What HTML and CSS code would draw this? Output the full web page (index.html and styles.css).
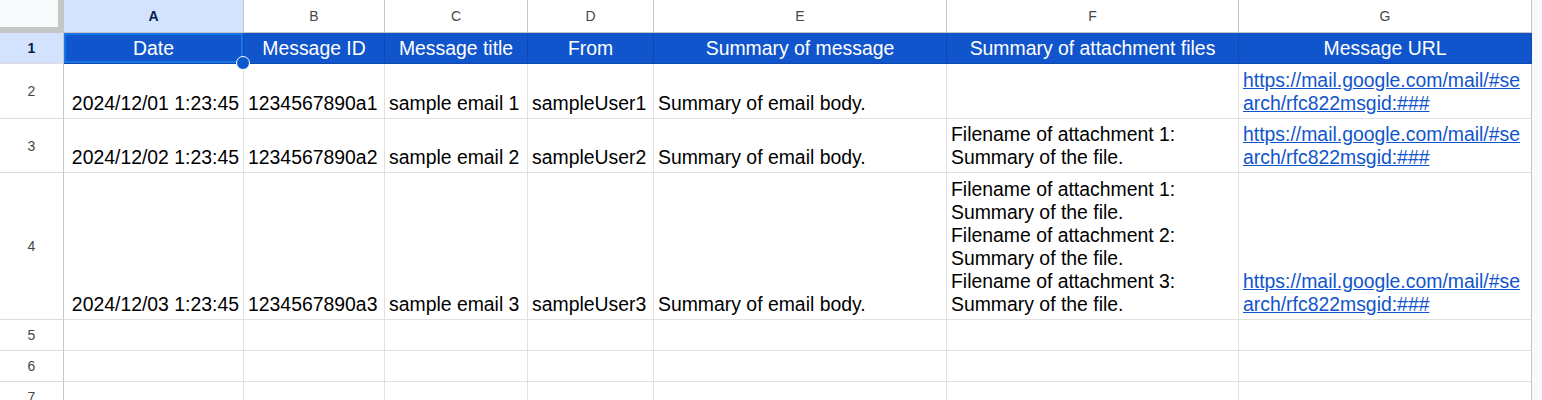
FILE: index.html
```html
<!DOCTYPE html>
<html lang="en">
<head>
  <meta charset="UTF-8">
  <title>Mail summary sheet</title>
  <link rel="stylesheet" href="styles.css">
</head>
<body>

  <!-- Spreadsheet grid -->
  <div class="sheet">
    <!-- column letters -->
    <div class="corner"></div>
    <div class="col-head sel">A</div>
    <div class="col-head">B</div>
    <div class="col-head">C</div>
    <div class="col-head">D</div>
    <div class="col-head">E</div>
    <div class="col-head">F</div>
    <div class="col-head last">G</div>

    <!-- row 1: titles -->
    <div class="row-head sel">1</div>
    <div class="cell title active">Date<span class="handle"></span></div>
    <div class="cell title">Message ID</div>
    <div class="cell title">Message title</div>
    <div class="cell title">From</div>
    <div class="cell title">Summary of message</div>
    <div class="cell title">Summary of attachment files</div>
    <div class="cell title last">Message URL</div>

    <!-- row 2 -->
    <div class="row-head">2</div>
    <div class="cell num">2024/12/01 1:23:45</div>
    <div class="cell">1234567890a1</div>
    <div class="cell">sample email 1</div>
    <div class="cell">sampleUser1</div>
    <div class="cell">Summary of email body.</div>
    <div class="cell"></div>
    <div class="cell last"><a class="lines" href="#">https://mail.google.com/mail/#se<br>arch/rfc822msgid:###</a></div>

    <!-- row 3 -->
    <div class="row-head">3</div>
    <div class="cell num">2024/12/02 1:23:45</div>
    <div class="cell">1234567890a2</div>
    <div class="cell">sample email 2</div>
    <div class="cell">sampleUser2</div>
    <div class="cell">Summary of email body.</div>
    <div class="cell"><span class="lines">Filename of attachment 1:<br>Summary of the file.</span></div>
    <div class="cell last"><a class="lines" href="#">https://mail.google.com/mail/#se<br>arch/rfc822msgid:###</a></div>

    <!-- row 4 -->
    <div class="row-head">4</div>
    <div class="cell num">2024/12/03 1:23:45</div>
    <div class="cell">1234567890a3</div>
    <div class="cell">sample email 3</div>
    <div class="cell">sampleUser3</div>
    <div class="cell">Summary of email body.</div>
    <div class="cell"><span class="lines">Filename of attachment 1:<br>Summary of the file.<br>Filename of attachment 2:<br>Summary of the file.<br>Filename of attachment 3:<br>Summary of the file.</span></div>
    <div class="cell last"><a class="lines" href="#">https://mail.google.com/mail/#se<br>arch/rfc822msgid:###</a></div>

    <!-- empty rows -->
    <div class="row-head">5</div>
    <div class="cell"></div><div class="cell"></div><div class="cell"></div><div class="cell"></div>
    <div class="cell"></div><div class="cell"></div><div class="cell last"></div>

    <div class="row-head">6</div>
    <div class="cell"></div><div class="cell"></div><div class="cell"></div><div class="cell"></div>
    <div class="cell"></div><div class="cell"></div><div class="cell last"></div>

    <div class="row-head">7</div>
    <div class="cell"></div><div class="cell"></div><div class="cell"></div><div class="cell"></div>
    <div class="cell"></div><div class="cell"></div><div class="cell last"></div>
  </div>

</body>
</html>
```

FILE: styles.css
```css
body {
  margin: 0;
  padding: 0;
  background: #f8f9fa;
  font-family: 'Liberation Sans', Arial, sans-serif;
  color: #000;
  overflow: hidden;
}

.sheet {
  display: grid;
  width: 1532px;
  grid-template-columns: 64px 180px 141px 143px 126px 293px 292px 293px;
  grid-template-rows: 33px 31px 55px 54px 147px 31px 31px 31px;
}

.sheet > div {
  box-sizing: border-box;
  border-right: 1px solid #e1e1e1;
  border-bottom: 1px solid #e1e1e1;
  background: #fff;
}

/* headers */
.sheet > .corner {
  background: #f8f9fa;
  border-right: 6px solid #c4c7c5;
  border-bottom: 6px solid #c4c7c5;
}

.sheet > .col-head,
.sheet > .row-head {
  display: flex;
  align-items: center;
  justify-content: center;
  font-size: 14px;
  color: #444746;
  border-color: #c4c7c5;
}

.sheet > .row-head {
  border-bottom-color: #dadce0;
}

.sheet > .col-head.sel,
.sheet > .row-head.sel {
  background: #d3e3fd;
  color: #041e49;
  font-weight: bold;
}

.sheet > .last {
  border-right-color: #c4c7c5;
}

/* cells */
.cell {
  display: flex;
  align-items: flex-end;
  padding: 0 4px 3px;
  font-size: 19.4px;
  line-height: 23px;
  white-space: nowrap;
  overflow: hidden;
}

.cell.num {
  justify-content: flex-end;
}

.lines {
  display: block;
}

.cell a {
  color: #1155cc;
  text-decoration: underline;
}

.sheet > .title {
  background: #1155cc;
  color: #fff;
  justify-content: center;
  border-color: #0e4aad;
}

.sheet > .title.last {
  border-right-color: #0e4aad;
}

/* selected cell A1 */
.sheet > .active {
  position: relative;
  overflow: visible;
  z-index: 2;
  box-shadow: inset 0 0 0 2px #1a73e8;
}

.handle {
  position: absolute;
  right: -7px;
  bottom: -7px;
  width: 14px;
  height: 14px;
  box-sizing: border-box;
  border-radius: 50%;
  background: #0b57d0;
  border: 1.5px solid #fff;
}
```
